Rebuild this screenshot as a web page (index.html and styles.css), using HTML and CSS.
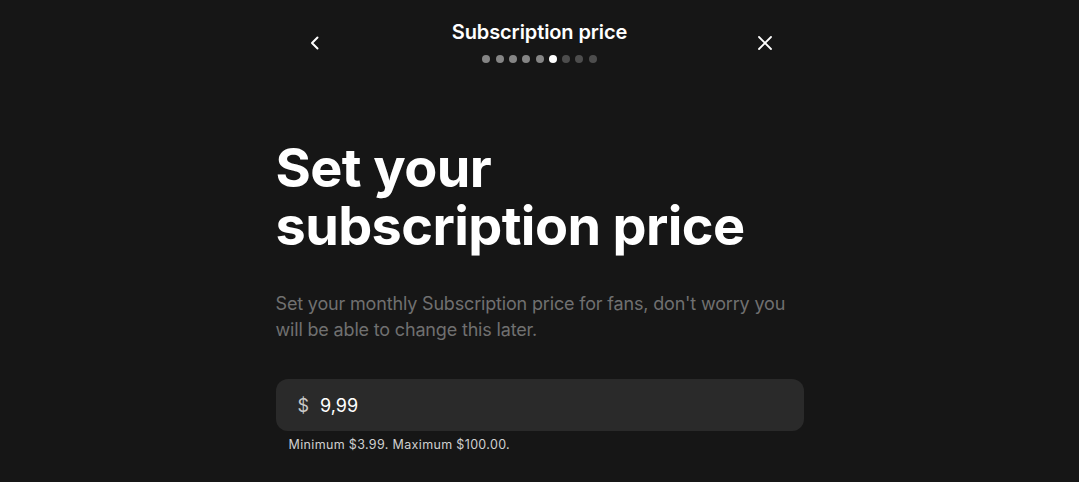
FILE: index.html
```html
<!DOCTYPE html>
<html lang="en">
<head>
<meta charset="utf-8">
<title>Subscription price</title>
<link rel="stylesheet" href="styles.css">
</head>
<body>
<div class="page">
  <header class="topbar">
    <button class="icon-btn" aria-label="Back">
      <svg width="24" height="24" viewBox="0 0 24 24" fill="none" stroke="#fff" stroke-width="2" stroke-linecap="round" stroke-linejoin="round"><path d="M14.5 6.5 9 12l5.5 5.5"/></svg>
    </button>
    <div class="title-wrap">
      <div class="title">Subscription price</div>
      <div class="dots">
        <span class="dot done"></span><span class="dot done"></span><span class="dot done"></span><span class="dot done"></span><span class="dot done"></span><span class="dot current"></span><span class="dot"></span><span class="dot"></span><span class="dot"></span>
      </div>
    </div>
    <button class="icon-btn" aria-label="Close">
      <svg width="24" height="24" viewBox="0 0 24 24" fill="none" stroke="#fff" stroke-width="1.8" stroke-linecap="round"><path d="M6 6l12 12M18 6 6 18"/></svg>
    </button>
  </header>
  <main class="content">
    <h1 class="heading"><span class="line">Set your</span><span class="line">subscription price</span></h1>
    <p class="lead">Set your monthly Subscription price for fans, don't worry you will be able to change this later.</p>
    <div class="field">
      <span class="currency">$</span>
      <span class="amount">9,99</span>
    </div>
    <div class="hint">Minimum $3.99. Maximum $100.00.</div>
  </main>
</div>
</body>
</html>
```
FILE: styles.css
```css
* { box-sizing: border-box; }
html, body { margin: 0; padding: 0; }
body {
  background: #161616;
  color: #fff;
  font-family: Inter, "Noto Sans", sans-serif;
  height: 482px;
  overflow: hidden;
}
.page {
  width: 528px;
  margin: 0 auto;
}
.topbar {
  display: flex;
  align-items: flex-start;
  justify-content: space-between;
  padding: 19px 19px 0 19px;
  height: 70px;
}
.icon-btn {
  width: 40px;
  height: 40px;
  margin-top: 4px;
  background: none;
  border: 0;
  padding: 0;
  display: flex;
  align-items: center;
  justify-content: center;
}
.title-wrap {
  display: flex;
  flex-direction: column;
  align-items: center;
}
.title {
  font-size: 20px;
  font-weight: 600;
  line-height: 26px;
  letter-spacing: -0.1px;
}
.dots {
  display: flex;
  gap: 5.3px;
  margin-top: 10px;
}
.dot {
  width: 8px;
  height: 8px;
  border-radius: 50%;
  background: #4d4d4d;
}
.dot.done { background: #858585; }
.dot.current { background: #fff; }
.content {
  padding-top: 69px;
}
.heading {
  margin: 0;
  font-size: 54px;
  line-height: 58px;
  font-weight: 700;
  letter-spacing: -0.6px;
}
.heading .line { display: block; }
.lead {
  margin: 36px 0 0;
  font-size: 18px;
  line-height: 26px;
  letter-spacing: -0.17px;
  color: #707070;
}
.field {
  margin-top: 36px;
  height: 52px;
  background: #2a2a2a;
  border-radius: 12px;
  display: flex;
  align-items: center;
  padding-left: 22px;
  font-size: 18px;
}
.currency {
  color: #c8c8c8;
  margin-right: 11px;
}
.amount { color: #fff; }
.hint {
  margin-top: 5px;
  padding-left: 13px;
  font-size: 12.5px;
  line-height: 17px;
  letter-spacing: 0.35px;
  color: #d0d0d0;
}
```
